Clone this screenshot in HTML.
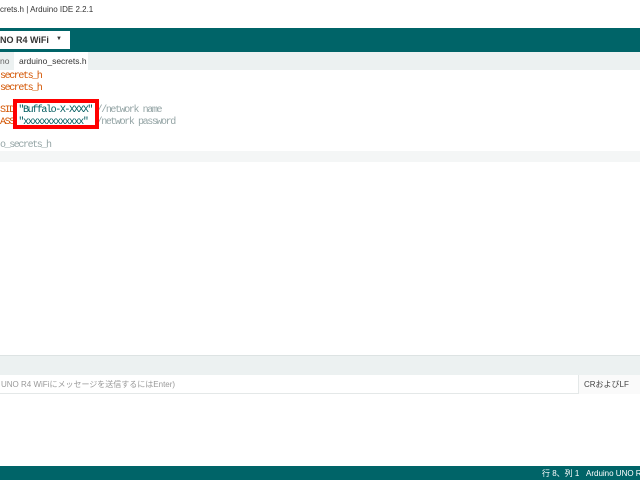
<!DOCTYPE html><html><head><style>
body{margin:0;width:640px;height:480px;position:relative;overflow:hidden;background:#fff;font-family:"Liberation Sans","Noto Sans CJK JP",sans-serif}
div{position:absolute;box-sizing:border-box;white-space:nowrap}
.m{font-family:"Liberation Mono",monospace;font-size:10px;letter-spacing:-1.4px;white-space:pre;left:0}
</style></head><body>
<div style="left:0;top:5px;font-size:8px;color:#333">crets.h | Arduino IDE 2.2.1</div>
<div style="left:0;top:28px;width:640px;height:24px;background:#006468"></div>
<div style="left:0;top:31px;width:70px;height:18px;background:#fff;font-size:9px;font-weight:bold;color:#333;padding:4px 0 0 0">NO R4 WiFi<span style="position:absolute;left:56px;top:5px;font-size:6px">▼</span></div>
<div style="left:0;top:52px;width:640px;height:18px;background:#ecf1f1"></div>
<div style="left:0;top:56px;font-size:8.5px;color:#666">no</div>
<div style="left:14px;top:52px;width:74px;height:18px;background:#fff;font-size:8.5px;color:#333;padding:4px 0 0 5px">arduino_secrets.h</div>
<div class="m" style="top:71px;color:#d35400">secrets_h</div>
<div class="m" style="top:83px;color:#d35400">secrets_h</div>
<div class="m" style="top:105px"><span style="color:#d35400">SID </span><span style="color:#005c5f">"Buffalo-X-XXXX"</span><span style="color:#95a5a6"> //network name</span></div>
<div class="m" style="top:117px"><span style="color:#d35400">ASS </span><span style="color:#005c5f">"xxxxxxxxxxxxx"</span><span style="color:#95a5a6">  /network password</span></div>
<div class="m" style="top:140px;color:#95a5a6">o_secrets_h</div>
<div style="left:0;top:151px;width:640px;height:11px;background:#f4f6f6"></div>
<div style="left:13px;top:99px;width:86px;height:30px;border:4px solid #f00"></div>
<div style="left:0;top:355px;width:640px;height:1px;background:#dde3e3"></div>
<div style="left:0;top:356px;width:640px;height:19px;background:#ecf1f1"></div>
<div style="left:0;top:375px;width:640px;height:19px;border-bottom:1px solid #e4e8e8;font-size:8px;color:#999;padding:4px 0 0 1px">UNO R4 WiFiにメッセージを送信するにはEnter)</div>
<div style="left:578px;top:375px;width:62px;height:19px;border-left:1px solid #e4e8e8;background:#fafafa;font-size:8px;color:#444;padding:4px 0 0 5px">CRおよびLF</div>
<div style="left:0;top:466px;width:640px;height:14px;background:#006468;color:#fff;font-size:8px;padding:2px 0 0 542px">行 8、列 1&nbsp;&nbsp;&nbsp;Arduino UNO R4 WiFi</div>
</body></html>
